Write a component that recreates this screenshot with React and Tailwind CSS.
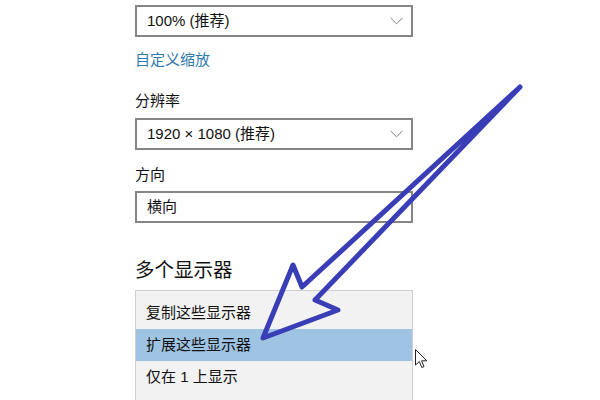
import React from "react";

const font = { fontFamily: '"Liberation Sans", "Noto Sans CJK SC", sans-serif' };

function Chevron() {
  return (
    <svg width="13" height="8" viewBox="0 0 13 8" className="shrink-0">
      <path d="M0.7 1 L6.5 6.8 L12.3 1" fill="none" stroke="#7d7d7d" strokeWidth="1" />
    </svg>
  );
}

function Select({ text, chevron = true }) {
  return (
    <div className="h-[32px] w-[278px] border-2 border-[#858585] bg-white flex items-center justify-between pl-[10px] pr-[8px]">
      <span className="text-[15px] leading-[20px] text-[#111]">{text}</span>
      {chevron && <Chevron />}
    </div>
  );
}

export default function App() {
  return (
    <div className="relative w-[600px] h-[400px] overflow-hidden bg-white" style={font}>
      <div className="flex flex-col pl-[135px] pt-[5px]">
        <Select text="100% (推荐)" />
        <div className="mt-[13px] text-[15px] leading-[20px] text-[#2f7bb0]">自定义缩放</div>
        <div className="mt-[21px] text-[15px] leading-[20px] text-[#111]">分辨率</div>
        <div className="mt-[7px]">
          <Select text="1920 × 1080 (推荐)" />
        </div>
        <div className="mt-[15px] text-[15px] leading-[20px] text-[#111]">方向</div>
        <div className="mt-[6px]">
          <Select text="横向" chevron={false} />
        </div>
        <div className="mt-[33px] text-[19.5px] leading-[28px] text-[#111]">多个显示器</div>
        <div className="mt-[6px] w-[278px] h-[120px] border border-[#cfcfcf] bg-[#f2f2f2] pt-[6px] flex flex-col">
          <div className="h-[32px] flex items-center pl-[10px] text-[15px] text-[#111]">复制这些显示器</div>
          <div className="h-[32px] flex items-center pl-[10px] text-[15px] text-[#111] bg-[#9fc4e3]">扩展这些显示器</div>
          <div className="h-[32px] flex items-center pl-[10px] text-[15px] text-[#111]">仅在 1 上显示</div>
        </div>
      </div>

      <svg className="absolute left-0 top-0 pointer-events-none" width="600" height="400" viewBox="0 0 600 400">
        <path
          d="M520 87 L302 287 L293 265 L263 338 L338 310 L315 300 Z"
          fill="none"
          stroke="#3a3eb6"
          strokeWidth="5"
          strokeLinejoin="round"
          strokeLinecap="round"
        />
      </svg>

      <svg className="absolute left-[415px] top-[349px]" width="13" height="20" viewBox="0 0 13 20">
        <path d="M0.5 0.5 L0.5 16 L4.3 12.5 L6.8 18.5 L9 17.6 L6.6 11.8 L11.8 11.8 Z" fill="#fff" stroke="#222" strokeWidth="1" strokeLinejoin="round" />
      </svg>
    </div>
  );
}
